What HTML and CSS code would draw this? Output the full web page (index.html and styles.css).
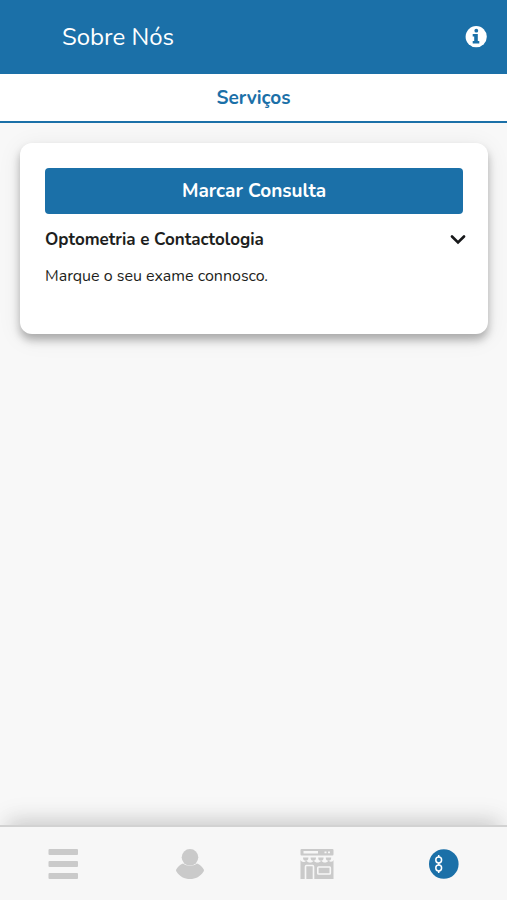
FILE: index.html
```html
<!DOCTYPE html>
<html lang="pt">
<head>
<meta charset="utf-8">
<meta name="viewport" content="width=device-width, initial-scale=1">
<title>Sobre Nós</title>
<link rel="stylesheet" href="styles.css">
</head>
<body>
<header class="topbar">
  <h1 class="topbar-title">Sobre Nós</h1>
  <button class="icon-button" type="button" aria-label="Informações">
    <svg width="22" height="22" viewBox="0 0 22 22" aria-hidden="true">
      <circle cx="11.200" cy="10.700" r="10.600" fill="#fff"/>
      <circle cx="11.300" cy="4.700" r="1.900" fill="#1b70a8"/>
      <path d="M7.700 8h5.100v6.900h1.500v2.600H7.700v-2.600h1.500v-4.300H7.700z" fill="#1b70a8"/>
    </svg>
  </button>
</header>
<nav class="tabs">
  <a class="tab" href="#servicos">Serviços</a>
</nav>
<main class="content" id="servicos">
  <section class="card">
    <button class="primary" type="button">Marcar Consulta</button>
    <button class="service" type="button" aria-expanded="true">
      <span>Optometria e Contactologia</span>
      <svg width="16" height="10" viewBox="0 0 16 10" aria-hidden="true">
        <path d="M2 1.500l6 6 6-6" fill="none" stroke="#17181a" stroke-width="2.600" stroke-linecap="round" stroke-linejoin="miter"/>
      </svg>
    </button>
    <p class="description">Marque o seu exame connosco.</p>
  </section>
</main>
<nav class="bottombar">
  <a class="bottombar-item" href="#menu" aria-label="Menu">
    <svg width="30" height="30" viewBox="0 0 30 30" fill="#cacaca" aria-hidden="true">
      <rect x=".5" width="29.500" height="6" rx="1"/><rect x=".5" y="12" width="29.500" height="6" rx="1"/><rect x=".5" y="24" width="29.500" height="6" rx="1"/>
    </svg>
  </a>
  <a class="bottombar-item" href="#perfil" aria-label="Perfil">
    <svg width="30" height="30" viewBox="0 0 30 30" fill="#cacaca" aria-hidden="true">
      <path d="M8 14.500C5 15.500 2.500 18 1.200 20.500q-.5 1 .2 2C4.500 27.500 9.500 30 15 30s10.500-2.500 13.600-7.500q.700-1 .2-2C27.500 18 25 15.500 22 14.500 18 17.500 12 17.500 8 14.500z"/>
      <circle cx="15" cy="8.300" r="8.300"/>
    </svg>
  </a>
  <a class="bottombar-item" href="#loja" aria-label="Loja">
    <svg width="34" height="30" viewBox="0 0 34 30" aria-hidden="true">
      <rect x=".5" width="33" height="6.500" rx="1" fill="#cacaca"/>
      <path d="M3.500 2h14.500v2.500H3.500zM24.500 2.500h2v1.800h-2zM28 2.500h2v1.800h-2z" fill="#f7f7f7"/>
      <rect x=".5" y="11" width="33" height="19" fill="#cacaca"/>
      <path d="M0 8h34v2.500c-1 2.600-3.800 3-5.500 1-1.600 2.800-5.600 2.800-7.200 0-1.800 2.800-5.800 2.800-7.600 0-1.600 2.800-5.600 2.800-7.400 0C4.500 14 1 13.200 0 10.500z" fill="#f7f7f7"/>
      <path d="M3 8.500h5.400q0 3.300-2.700 3.300T3 8.500zM10.600 8.500H16q0 3.300-2.700 3.300t-2.700-3.300zM18.200 8.500h5.400q0 3.300-2.700 3.300t-2.700-3.300zM25.800 8.500h5.400q0 3.300-2.700 3.300t-2.700-3.300z" fill="#cacaca"/>
      <path d="M5.500 30V17.500q0-1 1-1h6q1 0 1 1V30" fill="none" stroke="#f7f7f7" stroke-width="1.600"/>
      <rect x="17.800" y="18" width="12.500" height="7" rx=".7" fill="none" stroke="#f7f7f7" stroke-width="1.600"/>
    </svg>
  </a>
  <a class="bottombar-item" href="#sobre" aria-label="Sobre Nós" aria-current="page">
    <svg width="30" height="30" viewBox="0 0 30 30" aria-hidden="true">
      <circle cx="14.800" cy="15" r="14.800" fill="#1b70a8"/>
      <g fill="none" stroke="#fff" stroke-width="1.500">
        <circle cx="9.700" cy="11" r="2.900"/><circle cx="9.700" cy="19" r="2.900"/>
        <path d="M9.700 6v2.200M9.700 13.800v2.400M9.700 21.800V24"/>
      </g>
    </svg>
  </a>
</nav>
</body>
</html>
```
FILE: styles.css
```css
* { box-sizing: border-box; }

body {
  margin: 0;
  min-height: 100vh;
  display: flex;
  flex-direction: column;
  background: #f8f8f8;
  color: #1d1e20;
  font-family: Nunito, "Open Sans", sans-serif;
}

button {
  border: 0;
  padding: 0;
  background: none;
  color: inherit;
  font-family: inherit;
  cursor: pointer;
}

svg { display: block; }

.topbar {
  display: flex;
  align-items: center;
  justify-content: space-between;
  height: 74px;
  padding: 0 20px 0 62px;
  background: #1b70a8;
  color: #fff;
}

.topbar-title {
  margin: 0;
  font-size: 24px;
  font-weight: 400;
  line-height: 32px;
}

.tabs {
  display: flex;
  background: #fff;
  border-bottom: 2px solid #1b70a8;
}

.tab {
  flex: 1;
  padding: 12px 0 11px;
  color: #1b70a8;
  font-size: 19px;
  font-weight: 700;
  line-height: 24px;
  text-align: center;
  text-decoration: none;
}

.content {
  flex: 1;
  padding: 20px 19px 20px 20px;
}

.card {
  display: flex;
  flex-direction: column;
  padding: 25px 25px 46px;
  border-radius: 12px;
  background: #fff;
  box-shadow: 0 6px 8px rgba(0, 0, 0, .28), 0 4px 24px rgba(0, 0, 0, .08);
}

.primary {
  height: 46px;
  border-radius: 4px;
  background: #1b70a8;
  color: #fff;
  font-size: 19px;
  font-weight: 700;
}

.service {
  display: flex;
  align-items: center;
  justify-content: space-between;
  margin: 14px -3px 12px 0;
  font-size: 17px;
  font-weight: 700;
  line-height: 24px;
}

.description {
  margin: 0;
  font-size: 16px;
  line-height: 24px;
}

.bottombar {
  display: grid;
  grid-template-columns: repeat(4, 1fr);
  height: 75px;
  border-top: 2px solid #d2d2d2;
  background: #f7f7f7;
  box-shadow: 0 -12px 20px -8px rgba(0, 0, 0, .16), 0 -8px 32px rgba(0, 0, 0, .04);
}

.bottombar-item {
  display: flex;
  align-items: center;
  justify-content: center;
}
```
